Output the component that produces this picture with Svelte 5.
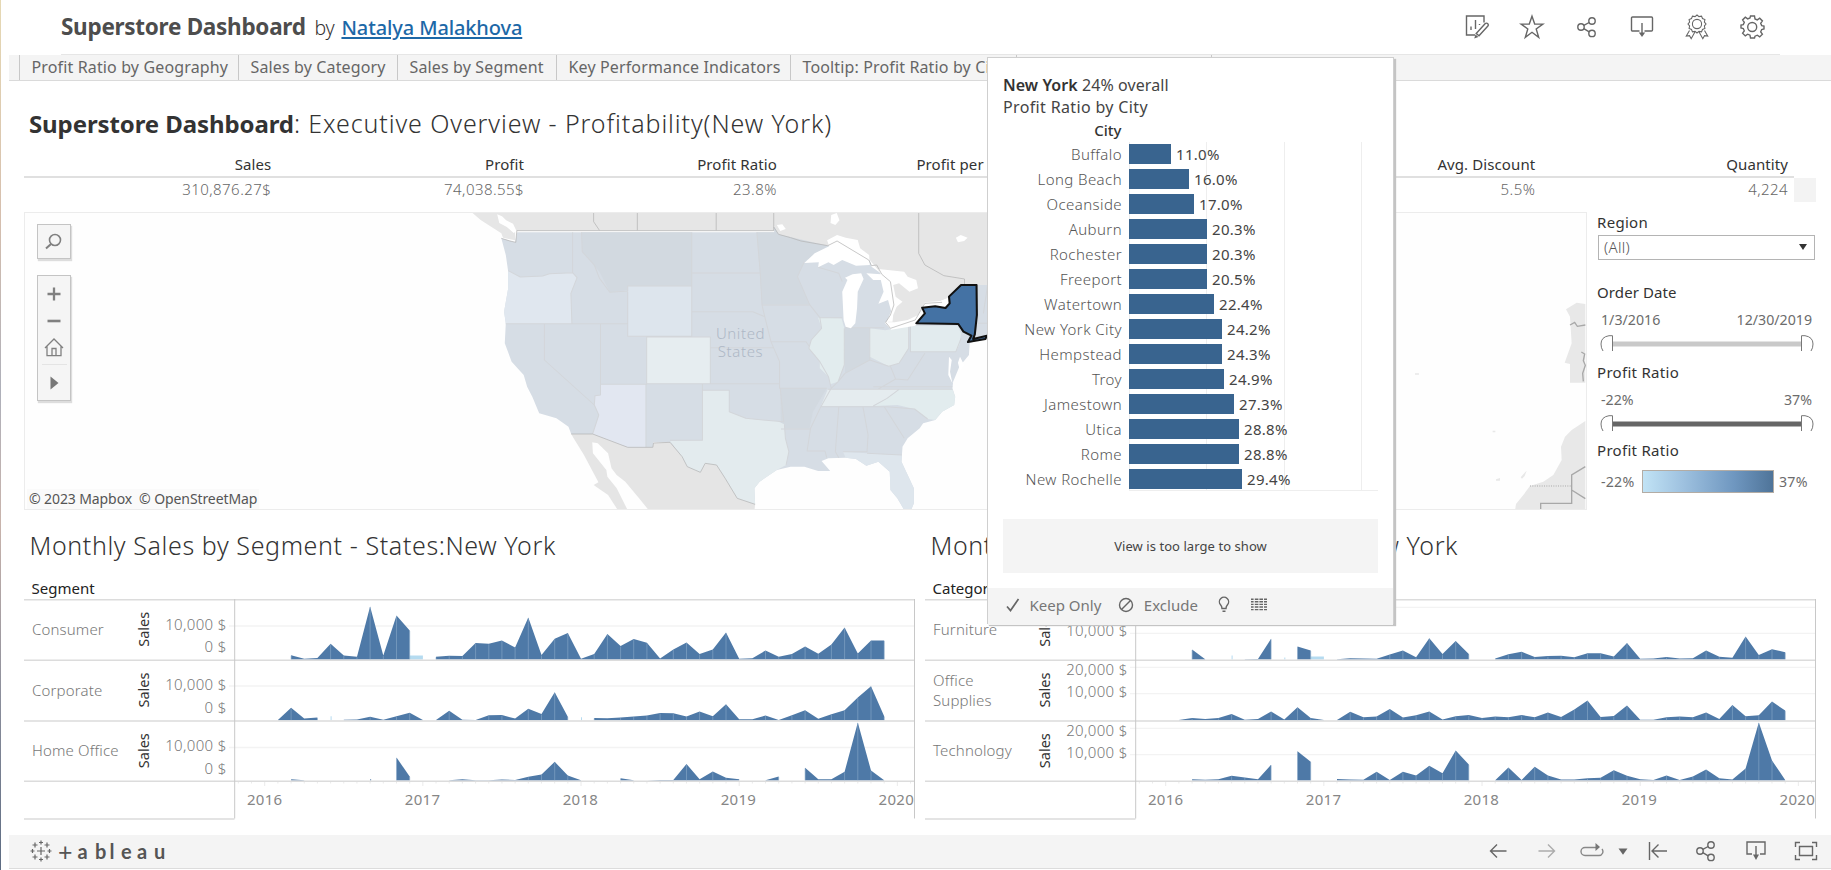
<script>
  const tabs = [
    'Profit Ratio by Geography',
    'Sales by Category',
    'Sales by Segment',
    'Key Performance Indicators',
    'Tooltip: Profit Ratio by City',
    ''
  ];

  const kpis = [
    ['Sales', '310,876.27$'],
    ['Profit', '74,038.55$'],
    ['Profit Ratio', '23.8%'],
    ['Profit per Order', ''],
    ['', ''],
    ['Avg. Discount', '5.5%'],
    ['Quantity', '4,224']
  ];

  const cities = [
    ['Buffalo', '11.0%', 42],
    ['Long Beach', '16.0%', 60],
    ['Oceanside', '17.0%', 65],
    ['Auburn', '20.3%', 78],
    ['Rochester', '20.3%', 78],
    ['Freeport', '20.5%', 78],
    ['Watertown', '22.4%', 85],
    ['New York City', '24.2%', 93],
    ['Hempstead', '24.3%', 93],
    ['Troy', '24.9%', 95],
    ['Jamestown', '27.3%', 105],
    ['Utica', '28.8%', 110],
    ['Rome', '28.8%', 110],
    ['New Rochelle', '29.4%', 113]
  ];

  // Each run is [first month index, heights...]; light runs are loss-making months.
  const charts = [
    {
      title: 'Monthly Sales by Segment - States:New York',
      head: 'Segment',
      rows: [
        {
          name: ['Consumer'], base: 659.5, mid: 629.3, labelY: [635.3],
          axis: [['10,000 $', 630.5], ['0 $', 652.3]], grid: [626],
          runs: [
            [2, 4.3, 0.7, 1.5, 15.7, 4, 2.7, 53, 4, 44, 29],
            [13, 2.7, 3.7, 3.5, 16.5, 15.7, 19, 12, 42, 4.5, 20.7, 26.5, 0.7, 5.5, 25.5, 13.5, 20.5, 16.7, 1, 10, 17, 5.5, 10, 27, 0.7, 1.3, 9, 2.7, 5.5, 13, 5.7, 15, 32, 6, 19, 19]
          ],
          light: [[11, 4, 4]]
        },
        {
          name: ['Corporate'], base: 720.3, mid: 690, labelY: [695.5],
          axis: [['10,000 $', 690.5], ['0 $', 714]], grid: [686],
          runs: [
            [1, 0.3, 12.5, 1.7, 2.7],
            [6, 0.5, 0.7, 3.5, 0.5, 4, 7.5, 0.3],
            [13, 0.3, 9.5, 0.5, 0.3, 5, 5.3, 1.7, 11.5, 6.3, 28, 3.5],
            [25, 2.3, 2, 2.7, 3.7, 4.7, 7.3, 7, 3.7, 8.7, 4, 16, 1, 1, 4.7, 0.3, 5, 10, 1.5, 6, 10, 22.7, 34, 4]
          ],
          light: [[5, 4], [24, 3]]
        },
        {
          name: ['Home Office'], base: 780.5, mid: 750.7, labelY: [756.3],
          axis: [['10,000 $', 751.5], ['0 $', 774.5]], grid: [747.5],
          runs: [
            [2, 1.2, 0.3],
            [8, 1.3],
            [10, 23, 4],
            [14, 0.3, 1.3, 0.2, 0.2, 1, 0.5, 3.7, 6, 18.7, 5, 0.3],
            [27, 2.3, 0.3],
            [29, 0.1, 0.4, 0.6, 16.5, 1.3, 9, 2.7, 1.3],
            [38, 0.2, 4],
            [41, 12.7, 1.3, 1.3, 8.7, 58, 10, 0.3]
          ],
          light: []
        }
      ]
    },
    {
      title: 'Monthly Sales by Category - States:New York',
      head: 'Category',
      rows: [
        {
          name: ['Furniture'], base: 659.5, mid: 629.3, labelY: [635.3],
          axis: [['10,000 $', 637]], grid: [607.3, 633.3],
          runs: [
            [2, 10, 0.3],
            [6, 0.3, 0.5, 20.7],
            [10, 13, 9],
            [13, 0.3, 1.3, 1, 0.7, 5, 9, 2.3, 21.3, 5.5, 18.5, 5.5],
            [25, 1, 5.3, 7.7, 2.5, 3.5, 3.7, 2.3, 6.3, 6.3, 3, 16.5, 0.7, 1, 2.5, 1, 1.2, 9, 2.7, 1.7, 23, 4.5, 10.3, 7.3]
          ],
          light: [[5, 4], [9, 2], [11, 3, 3]]
        },
        {
          name: ['Office', 'Supplies'], base: 720.3, mid: 690, labelY: [685.5, 705.7],
          axis: [['20,000 $', 676], ['10,000 $', 697.3]], grid: [667.3, 693.7],
          runs: [
            [1, 0.3, 2.3, 1.3, 2.3, 6.3, 0.5, 1.3, 8.7, 0.7, 13, 2.3, 0.3],
            [13, 0.3, 8.5, 3, 3.7, 11.3, 2.7, 5, 8.7, 0.8, 4, 5.3, 2.3, 3.7, 3, 5.3, 3, 7.7, 3.3, 10.7, 19.7, 3.3, 4.3, 14.7, 0.5, 0.5, 3, 3.7, 3, 7.7, 1.3, 15.3, 4, 5, 18.7, 9.7]
          ],
          light: []
        },
        {
          name: ['Technology'], base: 780.5, mid: 750.7, labelY: [756.3],
          axis: [['20,000 $', 737], ['10,000 $', 759]], grid: [728.3, 754.7],
          runs: [
            [2, 1.2, 0.7, 1.3, 4.7, 3, 1.3, 15.7],
            [10, 29.3, 18.7],
            [13, 1.5, 1, 0.7, 8.7, 0.5, 8.7, 5, 14.7, 7.3, 30, 16],
            [25, 0.3, 13, 0.5, 13.7, 5, 1, 1, 2.3, 2.7, 10.3, 4.7, 1.3, 0.5, 5, 0.5, 4, 11, 2.3, 1, 12, 58, 20, 0.5]
          ],
          light: []
        }
      ]
    }
  ];

  const monthX = (k) => 264.7 + k * 13.18;

  function area(run, base) {
    const [start, ...h] = run;
    if (h.length === 1) {
      const x = monthX(start);
      return `M${x} ${base}V${base - h[0]}h1V${base}z`;
    }
    const top = h.map((v, i) => `L${monthX(start + i).toFixed(1)} ${(base - v).toFixed(1)}`).join('');
    return `M${monthX(start).toFixed(1)} ${base}${top}L${monthX(start + h.length - 1).toFixed(1)} ${base}z`;
  }

  function seams(run, base) {
    const [start, ...h] = run;
    return h.map((v, i) => (v > 2 ? `M${monthX(start + i).toFixed(1)} ${base}V${base - v + 0.5}` : '')).join('');
  }

  const years = [2016, 2017, 2018, 2019, 2020];
  const months = Array.from({ length: 52 }, (_, i) => i - 2);
</script>

{#snippet shareIcon()}
  <svg width="22" height="22" viewBox="0 0 22 22" class="line">
    <circle cx="5" cy="11" r="3.2" /><circle cx="16" cy="5" r="3.2" /><circle cx="16" cy="17.4" r="3.2" />
    <path d="M7.8 9.4l5.4-2.9M7.8 12.6l5.4 3.2" />
  </svg>
{/snippet}

<div class="page">
  <header>
    <h1>Superstore Dashboard</h1>
    <span class="by">by</span>
    <a href="#author">Natalya Malakhova</a>
    <nav>
      <span>
        <svg width="26" height="26" viewBox="0 0 26 26" class="line">
          <path d="M20 8.500V2H2.500v19H11" />
          <path d="M7 16v-3.500M11.500 15V6M15.500 11v-1" />
          <path d="M12.200 19.500L21.300 9.600a1.600 1.600 0 0 1 2.300 0l.3.300a1.600 1.600 0 0 1 0 2.200L15 21.800z" />
          <path d="M11.500 20.500l-1.300 4 4.200-1.600z" fill="#666" stroke="none" />
        </svg>
      </span>
      <span>
        <svg width="26" height="26" viewBox="0 0 26 26" class="line">
          <path d="M13 2.200l2.700 7.900h8.200l-6.700 4.900 2.500 8.400L13 18.300l-6.700 5.100 2.500-8.400-6.700-4.900h8.200z" />
        </svg>
      </span>
      <span>{@render shareIcon()}</span>
      <span>
        <svg width="26" height="26" viewBox="0 0 26 26" class="line">
          <path d="M10.500 17H3.500a1 1 0 0 1-1-1V4a1 1 0 0 1 1-1h19a1 1 0 0 1 1 1v12a1 1 0 0 1-1 1h-7M13 9v11" />
          <path d="M9.800 18.500h6.400L13 23z" fill="#666" stroke="none" />
        </svg>
      </span>
      <span>
        <svg width="26" height="28" viewBox="0 0 26 28" class="line thin">
          <path d="M13 2l2 1.600 2.500-.5 1 2.400 2.400 1-.5 2.500 1.600 2-1.600 2 .5 2.500-2.400 1-1 2.400-2.500-.5-2 1.600-2-1.600-2.500.5-1-2.400-2.400-1 .5-2.500-1.600-2 1.600-2-.5-2.500 2.400-1 1-2.400 2.500.5z" />
          <circle cx="13" cy="11" r="4.600" />
          <path d="M5.500 17.500L2.300 23l3.200-.3 1.700 3 3.700-6.600M20.500 17.500l3.200 5.500-3.200-.3-1.700 3-3.700-6.600" />
        </svg>
      </span>
      <span>
        <svg width="26" height="26" viewBox="0 0 26 26" class="line">
          <path d="M11 2h4l.5 2.900 2.300 1 2.400-1.700 2.700 2.700-1.700 2.400 1 2.300 2.300.4v3l-2.300.5-1 2.300 1.700 2.400-2.700 2.700-2.400-1.700-2.300 1L15 24h-4l-.5-2.800-2.300-1-2.400 1.700-2.700-2.700 1.700-2.400-1-2.300L1.500 14v-3l2.300-.4 1-2.300-1.700-2.400 2.700-2.700 2.400 1.700 2.300-1z" transform="translate(.5 0)" />
          <circle cx="13.200" cy="13" r="4.500" />
        </svg>
      </span>
    </nav>
  </header>

  <div class="tabs">
    <i></i>
    {#each tabs as tab}<span>{tab}</span>{/each}
    <i class="end"></i>
  </div>

  <h2><b>Superstore Dashboard</b>: Executive Overview - Profitability(New York)</h2>

  <div class="kpis">
    <div class="heads">{#each kpis as [name]}<span>{name}</span>{/each}</div>
    <div class="vals">{#each kpis as [, value]}<span>{value}</span>{/each}<i></i></div>
  </div>

  <div class="middle">
    <div class="map">
      <svg width="1561" height="296" viewBox="25 213 1561 296">
        <g transform="translate(460 205) scale(.34436 .33333)">
          <path fill="#e6e6e6" d="M32 20L60 45 95 68 120 85 125 98 160 106V78H913V64L925 88 990 108 1068 122 1095 110 1190 165 1222 205 1250 230 1262 290 1240 360 1320 345 1345 305 1420 280 1455 240H1540V20z" />
          <path fill="#fff" d="M108 28l14 6 12 12 20 10 10 22-8 6-20-18-22-12zM1078 30l16-6 8 22-12 14-14-6zM1440 98l14-8 20 8-10 10-18 4zM920 60l16-2 10 14-16 6z" />
          <path fill="#e5e5e5" d="M323 687H385L487 727H560L562 714 610 712 645 755 660 785 698 802 712 775 745 780 770 820 805 880 857 898 855 918H550L520 880 480 830 455 810 440 790 430 745 400 715 384 712 386 745 425 795 428 815 455 850 488 918H460L430 870 388 840 402 832 360 750 330 700z" />
          <g stroke="#fff" stroke-width="3" stroke-linejoin="round">
            <path stroke="none" fill="#d6dde5" d="M120 100L160 112 166 82H913V65L925 88 960 98 990 108 1030 118 1068 122 1095 110 1190 165 1195 185 1222 205 1250 230 1260 290 1250 330 1235 355 1250 370 1300 358 1325 350 1420 300 1455 240H1540V392L1500 405 1480 415 1478 450 1450 485 1432 530 1430 550 1438 575 1435 600 1400 620 1380 645 1345 655 1335 670 1300 700 1285 725 1282 770 1300 810 1318 850 1318 895 1310 915H1290L1270 880 1250 855 1248 800 1215 770 1180 782 1150 762 1120 758 1070 760 1050 768 1075 798 1040 798 1000 785 960 785 920 795 870 830 855 850 857 898 805 880 770 820 745 780 712 775 698 802 660 785 645 755 610 712H562L560 727H487L385 687H323L315 665 280 640 230 625 210 575 195 545 185 510 150 470 130 415 133 355 128 320 140 250V200L133 150z" />
          </g>
          <g fill="#d2d9e0">
            <path d="M353 82H672V242H487V255L435 262 405 200 355 140z" />
            <path d="M862 82H913V65L925 88 1068 122 1000 170 980 215 1015 298H877z" />
            <path d="M930 550H1065L1025 620 1015 670H932zM1118 368H1190V465L1118 505z" />
          </g>
          <g fill="#e0e7ef">
            <path d="M140 197L175 216 240 213 260 206 327 203 340 218 322 265 325 356H133L128 320 140 250z" />
            <path fill="#dde5ed" d="M487 243H673V394H487z" />
            <path fill="#e6edf0" d="M542 396H727V536H542z" />
            <path fill="#e2e7f1" d="M408 538H540V727H487L385 687 403 630 390 600 392 572 408 570z" />
            <path fill="#e3ebee" d="M704 556H782V620L830 640 880 645 920 648 942 658 945 700 955 740 947 780 920 795 870 830 855 850 857 898 805 880 770 820 745 780 712 775 698 802 660 785 645 755 610 708 704 706z" />
            <path fill="#e2ecee" d="M1040 338L1108 340 1116 370V480L1098 530 1075 538 1070 515 1045 490V470L1013 430 1020 405 1050 370z" />
            <path fill="#e4ecee" d="M1190 370L1235 376 1303 362V430L1275 475 1245 484 1190 455z" />
            <path fill="#e2ebee" d="M1308 362H1445L1455 385 1450 420 1440 440H1308z" />
            <path fill="#e5ecef" d="M1068 553H1275L1240 580 1200 603H1048z" />
            <path fill="#e2ecee" d="M1275 553H1430L1438 575 1435 600 1400 620 1380 645 1358 642 1320 612 1270 600 1200 603 1240 580z" />
            <path fill="#dee6ed" d="M1112 740L1180 745 1283 750 1282 770 1300 810 1318 850V895L1310 915H1290L1270 880 1250 855 1248 800 1215 770 1180 782 1150 762 1120 758z" />
          </g>
          <path fill="none" stroke="#d3d6da" stroke-width="3" stroke-linejoin="round" d="M140 197L175 216 240 213 260 206 327 203V82M327 203L340 218 322 265 325 356M353 82L355 140 390 180 405 220 435 262 487 258V243H673V394H487V260M133 356H487M245 356V465L390 600 403 630 385 687M408 356V570L392 572 390 600M408 538H542V396M540 538V727M542 396H727V536H542M673 82V394M673 204H872M673 320H850L885 335M727 428H912M862 82L872 204 877 300H1015M877 300L885 335 903 410H1005L1015 425M903 410L928 470V550H1065M727 536H928M704 538V706H610M704 556H782V620L830 640 880 645 940 650 930 550M932 672H1018M942 658L945 700 955 740 947 780M1015 298L980 215 1000 170M1015 298L1045 338H1110M1045 338L1050 370 1020 405 1013 430 1045 470 1070 515 1078 550M1116 370V480L1098 530 1078 550 1048 605 1018 670 1008 738H1060L1065 758M1040 187L1100 205 1110 230M1118 368H1232M1190 370V465L1118 505 1098 530M1190 465L1245 484 1275 475 1303 430V362M1250 484L1265 522 1300 525 1350 445M1308 362V440H1440L1455 400M1200 545H1430M1265 522L1215 552M1068 553H1430M1048 605H1240L1320 612 1358 642M1275 553L1240 580 1200 603M1100 605L1090 740 1100 758M1170 605L1185 690 1182 740H1112M1182 745L1283 750M1232 605L1290 700M1500 355H1540M1520 325L1532 240" />
          <g fill="#fff">
            <path d="M1000 174L1030 145 1072 124 1066 106 1095 90 1120 98 1155 105 1162 130 1188 150 1190 180 1150 182 1110 165 1085 180 1070 172 1040 187 1042 172z" />
            <path d="M1114 345L1110 260 1125 225 1118 218 1140 208 1165 205 1172 222 1155 260 1153 310 1148 355 1135 370 1120 365z" />
            <path d="M1180 205L1222 208 1215 192 1290 200 1300 215 1325 225 1330 250 1305 260 1275 235 1258 240 1265 275 1285 290 1268 305 1258 330 1256 350 1240 350 1252 318 1243 285 1215 296 1230 260 1222 225 1200 225z" />
            <path d="M1233 352L1252 374 1322 362 1350 333 1335 328 1300 345 1262 352z" />
            <path d="M1342 306L1350 292 1395 288 1422 276V300L1380 310z" />
            <path d="M1420 455L1428 465 1423 500 1430 535 1418 510zM1452 455l12 25-12 18-6-25z" />
          </g>
          <path fill="none" stroke="#b5b5b5" stroke-width="2.200" d="M120 100L145 108 162 112 165 77H911V66L925 88 960 98 990 108 1068 122 1095 108 1187 165 1195 182 1210 180 1225 208 1250 230 1260 300 1250 330 1236 352 1250 370 1322 345 1350 295 1400 292M388 22V50L405 76M515 22V76M744 22V76M911 22V66M1332 22V145L1350 180 1405 212 1465 222V238M323 687H385L487 727H560L562 714 610 712 645 755 660 785 698 802 712 775 745 780 770 820 805 880 857 898" />
          <path fill="#4472a4" stroke="#111" stroke-width="6" stroke-linejoin="round" d="M1325 355L1350 325 1342 308 1380 304 1410 309 1422 295 1420 275 1455 240H1500L1501 330 1495 388 1490 402 1530 392 1526 402 1475 411 1485 392 1462 380 1447 357z" />
        </g>
        <g transform="translate(1390 200) scale(.33333)">
          <path fill="#e8e8e8" d="M528 328L560 308 586 312V548H540V492L524 488 545 430 540 350zM586 663L545 690 525 710 513 740 515 780 490 825 460 845 420 858 400 885 378 912 375 932H586zM75 520h12v4H75zM308 692h8v5h-8zM318 838l12-4v8h-12zM392 832l14-16 4-4-6 16-8 8z" />
          <path fill="none" stroke="#a8a8a8" stroke-width="4" d="M540 375l14-8 8 12 24-4M574 456l10 6-4 20 6 14-8 24 2 24M452 930V910H545V825L586 800M545 870L586 896" />
          <path fill="none" stroke="#a8a8a8" stroke-width="3" stroke-dasharray="3 4" d="M420 858H545" />
        </g>
        <g class="country" text-anchor="middle"><text x="740.500" y="339">United</text><text x="740.500" y="357">States</text></g>
      </svg>
      <div class="controls">
        <div class="box search">
          <svg width="18" height="18" viewBox="0 0 18 18" class="ctl"><circle cx="10" cy="7" r="5.500" /><path d="M6 11l-5 4.600" stroke-width="2" /></svg>
        </div>
        <div class="box zoom">
          <svg width="14" height="14" viewBox="0 0 14 14" class="ctl"><path d="M.5 7h13M7 .5v13" stroke-width="2.300" /></svg>
          <svg width="14" height="14" viewBox="0 0 14 14" class="ctl"><path d="M.5 7h13" stroke-width="2.600" /></svg>
          <svg width="20" height="20" viewBox="0 0 20 20" class="ctl"><path d="M1 11l9-9 9 9M3 9.500v9.200h14V9.500M8 18.500v-7h4v7" stroke-width="1.300" /></svg>
          <hr />
          <svg width="14" height="14" viewBox="0 0 14 14"><path d="M3.500 .5L11.500 7l-8 6.500z" fill="#777" /></svg>
        </div>
      </div>
      <p class="credit">© 2023 Mapbox&nbsp; © OpenStreetMap</p>
    </div>

    <aside>
      <h4>Region</h4>
      <div class="select">(All)<svg width="8" height="6" viewBox="0 0 8 6"><path d="M0 0h8L4 6z" fill="#333" /></svg></div>
      <h4 class="date">Order Date</h4>
      <div class="ends"><span>1/3/2016</span><span>12/30/2019</span></div>
      <svg class="slider" width="216" height="17" viewBox="0 0 216 17">
        <path d="M14 9H203" stroke="#c9c9c9" stroke-width="5" />
        <g class="handle"><path d="M14.500 16V.7H11Q3 2 3 9q0 4 2 7" /><path d="M203.500 16V.7H207Q215 2 215 9q0 4-2 7" /></g>
      </svg>
      <h4 class="ratio">Profit Ratio</h4>
      <div class="ends"><span>-22%</span><span>37%</span></div>
      <svg class="slider" width="216" height="17" viewBox="0 0 216 17">
        <path d="M14 9H203" stroke="#666" stroke-width="5" />
        <g class="handle"><path d="M14.500 16V.7H11Q3 2 3 9q0 4 2 7" /><path d="M203.500 16V.7H207Q215 2 215 9q0 4-2 7" /></g>
      </svg>
      <h4 class="scale">Profit Ratio</h4>
      <div class="legend"><span>-22%</span><i></i><span>37%</span></div>
    </aside>
  </div>

  <div class="charts">
    {#each charts as chart}
      <section>
        <h3>{chart.title}</h3>
        <h5>{chart.head}</h5>
        <svg width="892" height="221" viewBox="24 599 892 221">
          {#each chart.rows as row}
            {#each row.name as line, i}<text class="name" x="32" y={row.labelY[i]}>{line}</text>{/each}
            <text class="measure" text-anchor="middle" transform="translate(148.700 {row.mid}) rotate(-90)">Sales</text>
            {#each row.axis as [label, y]}<text class="tick" text-anchor="end" x="226.700" y={y - 0.7}>{label}</text>{/each}
            {#each row.grid as y}<path d="M229 {y}H914" stroke="#f3f3f3" stroke-width="1.300" />{/each}
            {#each row.light as run}<path d={area(run, row.base)} fill="#b5dbf0" />{/each}
            {#each row.runs as run}
              <path d={area(run, row.base)} fill="#4e79a7" />
              <path d={seams(run, row.base)} stroke="#8aa9ca" stroke-width=".6" />
            {/each}
          {/each}
          <path d="M24 599.800H914.500M24 660.200H914.500M24 721H914.500M24 781.200H914.500M24 819H234.500" stroke="#dcdcdc" stroke-width="1.600" />
          <path d="M234.700 599V818.500M914.500 599V818.500" stroke="#c8c8c8" />
          {#each months as m}<path d="M{monthX(m)} 782v{m % 12 === 0 ? 4 : 1.500}" stroke="#e4e4e4" stroke-width=".8" />{/each}
          {#each years as year, i}<text class="year" text-anchor="middle" x={264.7 + i * 157.9} y="804.800">{year}</text>{/each}
        </svg>
      </section>
    {/each}
  </div>

  <footer>
    <svg class="mark" width="22" height="22" viewBox="0 0 22 22">
      <path d="M11 7v8M7 11h8M11 .5v4M9 2.500h4M11 17.500v4M9 19.500h4M2.500 9v4M.5 11h4M19.500 9v4M17.500 11h4M5 2.500v5M2.500 5h5M17 2.500v5M14.500 5h5M5 14.500v5M2.500 17h5M17 14.500v5M14.500 17h5" stroke="#666" stroke-width="1.200" />
    </svg>
    <div class="wordmark"><span>+</span><span>a</span><span>b</span><span>l</span><span>e</span><span>a</span><span>u</span></div>
    <div class="tools">
      <span style:width="49px"><svg width="18" height="16" viewBox="0 0 18 16" class="line"><path d="M17.500 8H1.500M8 1.500L1.500 8 8 14.500" /></svg></span>
      <span style:width="50px" class="off"><svg width="18" height="16" viewBox="0 0 18 16" class="line"><path d="M.5 8h16M10 1.500L16.500 8 10 14.500" /></svg></span>
      <span style:width="39px"><svg width="24" height="16" viewBox="0 0 24 16" class="line soft"><path d="M16 4.500H5a4 4 0 0 0 0 8h14a4 4 0 0 0 3-6.500" /><path d="M15.500 0L20 4l-4.500 4z" fill="#777" stroke="none" /></svg></span>
      <span style:width="23px"><svg width="10" height="7" viewBox="0 0 10 7"><path d="M.5 .5h9L5 6.800z" fill="#666" /></svg></span>
      <span style:width="47px"><svg width="20" height="20" viewBox="0 0 20 20" class="line"><path d="M1.500 1v18M19 10H4M10.500 3.500L4 10l6.500 6.500" /></svg></span>
      <span style:width="50px">{@render shareIcon()}</span>
      <span style:width="50px"><svg width="20" height="22" viewBox="0 0 20 22" class="line"><path d="M6 14H1V2h18v12h-5M10 6v11" /><path d="M7 14.500h6L10 20z" fill="#666" stroke="none" /></svg></span>
      <span style:width="50px"><svg width="24" height="20" viewBox="0 0 24 20" class="line"><path d="M1.500 6V1.500H6M18 1.500h4.500V6M22.500 14v4.500H18M6 18.500H1.500V14" /><path d="M5.500 5.500h13v9h-13z" /></svg></span>
    </div>
  </footer>

  <div class="tooltip">
    <p><b>New York</b> 24% overall</p>
    <p class="sub">Profit Ratio by City</p>
    <div class="col">City</div>
    <div class="bars">
      {#each cities as [name, value, w]}
        <div class="bar"><span class="city">{name}</span><i style:width="{w}px"></i><span class="pct">{value}</span></div>
      {/each}
    </div>
    <div class="notice">View is too large to show</div>
    <div class="actions">
      <svg width="14" height="14" viewBox="0 0 14 14" class="line"><path d="M1 8.500l3.500 4L12.500 1" stroke-width="1.700" /></svg>
      <span class="keep">Keep Only</span>
      <svg width="16" height="16" viewBox="0 0 16 16" class="line"><circle cx="8" cy="8" r="6.500" /><path d="M3.500 12.500l9-9" /></svg>
      <span class="excl">Exclude</span>
      <svg width="12" height="17" viewBox="0 0 12 17" class="line"><path d="M4 12.500Q4 10.500 2.500 8.800A4.600 4.600 0 1 1 9.500 8.800Q8 10.500 8 12.500zM4.500 15.200h3" /></svg>
      <svg class="data" width="16" height="13" viewBox="0 0 16 13"><path d="M0 1.200h2.600M0 3.800h2.600M0 6.400h2.600M0 9h2.600M0 11.600h2.600M3.800 1.200h3.600M3.800 3.800h3.600M3.800 6.400h3.600M3.800 9h3.600M3.800 11.600h3.600M8.400 1.200H12M8.400 3.800H12M8.400 6.400H12M8.400 9H12M8.400 11.600H12M13 1.200h3M13 3.800h3M13 6.400h3M13 9h3M13 11.600h3" stroke="#666" stroke-width="1.400" /></svg>
    </div>
  </div>
</div>

<style>
  :global(body) { margin: 0; overflow: hidden; }
  .page {
    position: relative;
    box-sizing: border-box;
    width: 1831px;
    height: 870px;
    overflow: hidden;
    background: linear-gradient(#e6d9b4, #d6bfae 25%, #aeb0ba 45%, #c9b4ac 60%, #8c8f9c 80%, #5c6b82) 0 0 / 1px 100% no-repeat #fff;
    font-family: 'Noto Sans', 'Open Sans', sans-serif;
    font-size: 15px;
    color: #333;
  }
  h1, h2, h3, h4, h5, p { margin: 0; font-weight: 400; }
  svg { display: block; flex: none; }
  .line { fill: none; stroke: #666; stroke-width: 1.4; }
  .thin { stroke-width: 1.1; }
  .soft { stroke: #888; }

  header {
    display: flex;
    align-items: baseline;
    box-sizing: border-box;
    height: 55px;
    margin: 0 51px 0 61px;
    border-bottom: 1.500px solid #e6e6e6;
  }
  h1 { font-size: 22.5px; font-weight: 700; letter-spacing: -.28px; line-height: 54px; color: #4d4d4d; }
  .by { margin-left: 9px; font-size: 19.5px; font-weight: 300; letter-spacing: -.3px; }
  header a { margin-left: 7px; font-size: 20px; font-weight: 500; letter-spacing: -.12px; color: #1d68a7; text-decoration: underline; text-decoration-thickness: 2px; text-underline-offset: 2px; }
  nav { display: flex; align-self: stretch; margin: 0 1px 0 auto; }
  nav span { display: flex; align-items: center; justify-content: center; width: 55px; }

  .tabs {
    display: grid;
    grid-template-columns: 10px 219px 159px 159px 234px 226px 195px 1fr;
    box-sizing: border-box;
    height: 25.5px;
    margin-left: 9px;
    background: #f4f4f4;
    border-bottom: 1.500px solid #dadada;
    font-size: 16px;
    line-height: 24px;
    letter-spacing: .14px;
    color: #666;
  }
  .tabs span { padding-left: 11.5px; border-left: 1px solid #c8c8c8; white-space: nowrap; overflow: hidden; }
  .tabs .end { border-left: 1px solid #c8c8c8; }

  h2 { height: 72.5px; padding-left: 29px; font-size: 25px; font-weight: 300; letter-spacing: .9px; line-height: 84px; }
  h2 b { font-size: 24px; font-weight: 700; letter-spacing: -.1px; }

  .kpis { margin-left: 24px; width: 1792px; }
  .heads { display: flex; box-sizing: border-box; width: 1770px; height: 25px; border-bottom: 2px solid #e0e0e0; line-height: 23px; letter-spacing: .1px; }
  .kpis span { box-sizing: border-box; width: 252.8px; padding-right: 5.5px; text-align: right; white-space: nowrap; }
  .vals { display: flex; height: 24px; line-height: 23px; letter-spacing: .45px; color: #666; }
  .vals span { font-weight: 350; }
  .vals i { width: 22px; background: #f3f3f3; }

  .middle { display: flex; height: 298px; margin: 10px 0 0 24px; }
  .map { position: relative; box-sizing: border-box; width: 1563px; border: 1px solid #ececec; background: #fefefe; }
  .country { font-size: 15px; font-weight: 300; letter-spacing: .6px; fill: #aeb8c6; }
  .controls { position: absolute; left: 12px; top: 11px; }
  .box { display: flex; flex-direction: column; align-items: center; box-sizing: border-box; width: 34px; background: #f5f5f5; border: 1px solid #c4c4c4; box-shadow: 1px 2px 1px #ddd; }
  .search { height: 35px; justify-content: center; margin-bottom: 16px; }
  .zoom { height: 126px; padding: 11px 0 0; }
  .zoom svg + svg { margin-top: 13px; }
  .zoom svg:nth-of-type(3) { margin-top: 9px; }
  .zoom hr { width: 25px; margin: 7px 0 11px; border: 0; border-top: 1px solid #e4e4e4; }
  .ctl { fill: none; stroke: #808080; stroke-width: 1.6; }
  .credit { position: absolute; left: 2px; bottom: 0; padding: 0 2px; background: #fafafa; font-size: 14px; line-height: 20px; letter-spacing: -.1px; color: #555; white-space: nowrap; }

  aside { width: 218px; padding-left: 10px; }
  h4 { padding-bottom: 1px; font-size: 15px; line-height: 21px; letter-spacing: .3px; }
  .select { display: flex; align-items: center; justify-content: space-between; box-sizing: border-box; width: 217px; height: 25px; margin: 1px 0 0 1px; padding: 0 7px 1px 5px; border: 1px solid #b4b4b4; font-size: 15px; font-weight: 300; letter-spacing: .3px; color: #555; }
  .date { margin-top: 22px; letter-spacing: .1px; }
  .ends { display: flex; justify-content: space-between; margin: 6px 3px 5px 4px; padding-bottom: 1px; font-size: 14.2px; line-height: 19px; color: #6c6c6c; }
  .slider { margin-left: 1px; }
  .handle { fill: none; stroke: #777; }
  .ratio { margin-top: 10px; }
  .scale { margin-top: 8px; }
  .legend { display: flex; align-items: center; height: 23px; margin: 8px 0 0 4px; font-size: 14.2px; line-height: 21px; letter-spacing: .2px; color: #6c6c6c; white-space: nowrap; }
  .legend span:first-child { width: 41px; }
  .legend i { box-sizing: border-box; width: 132px; height: 23px; margin-right: 5px; border: 1px solid #b3aca4; background: linear-gradient(90deg, #c1e3f5, #9fc2e0 30%, #6f97c0 70%, #4f7499); }

  .charts { display: grid; grid-template-columns: 892px 892px; column-gap: 9px; margin-left: 24px; height: 325px; }
  h3 { padding: 20px 0 0 5.5px; font-size: 25px; font-weight: 300; letter-spacing: .61px; line-height: 31px; white-space: nowrap; }
  h5 { margin-top: 16px; padding-left: 7.5px; font-size: 15px; line-height: 22px; color: #222; }
  .name { font-size: 15px; font-weight: 350; letter-spacing: .15px; fill: #777; }
  .measure { font-size: 14.5px; fill: #333; }
  .tick { font-size: 15px; font-weight: 350; letter-spacing: .35px; fill: #777; }
  .year { font-size: 15px; letter-spacing: .3px; fill: #868686; }

  footer { display: flex; align-items: center; box-sizing: border-box; height: 33.5px; margin-left: 9px; background: #f4f4f4; border-bottom: 1.500px solid #dcdcdc; }
  .mark { margin-left: 21px; }
  .wordmark { display: grid; grid-template-columns: 19.500px 17.500px 14.500px 11.500px 16px 17px 12px; margin-left: 6px; font-family: Lato, sans-serif; font-size: 20px; font-weight: 700; line-height: 28px; color: #555; }
  .wordmark span:first-child { font-size: 25px; font-weight: 400; }
  .tools { display: flex; margin-left: auto; }
  .tools span { display: flex; align-items: center; justify-content: center; height: 30px; }
  .off { opacity: .5; }

  .tooltip { position: absolute; left: 987px; top: 56.500px; box-sizing: border-box; width: 407px; height: 567px; padding-top: 16px; border: 1px solid #cfcfcf; background: #fff; box-shadow: 2px 2px 1px #c4c4c4; color: #444; }
  .tooltip p { padding-left: 15px; font-size: 16px; line-height: 22px; letter-spacing: .07px; white-space: nowrap; }
  .tooltip .sub { letter-spacing: .35px; }
  .tooltip b { font-weight: 600; color: #333; }
  .col { width: 133.5px; font-weight: 500; line-height: 24px; text-align: right; color: #333; }
  .bars { margin: 0 15px 0 140.500px; height: 348px; border-bottom: 1px solid #eee; background: repeating-linear-gradient(90deg, #eee 0 1px, transparent 1px 77.4px); }
  .bar { display: flex; align-items: center; height: 25px; margin-left: -140px; }
  .city { width: 133.5px; text-align: right; font-weight: 300; letter-spacing: .42px; color: #555; }
  .bar i { height: 19.5px; margin: 0 5px 0 7px; background: #39648f; }
  .pct { letter-spacing: .3px; color: #444; }
  .notice { width: 375px; height: 54px; margin: 28px 0 0 15px; background: #f4f4f4; font-size: 13px; line-height: 54px; letter-spacing: .06px; text-align: center; }
  .actions { display: flex; align-items: center; box-sizing: border-box; height: 37px; margin-top: 15.5px; padding: 0 0 4px 18px; background: #f4f4f4; font-size: 15px; color: #777; white-space: nowrap; }
  .keep { margin: 0 16.5px 0 9.5px; }
  .excl { margin: 0 20px 0 10px; }
  .data { margin-left: 21.5px; }
</style>
